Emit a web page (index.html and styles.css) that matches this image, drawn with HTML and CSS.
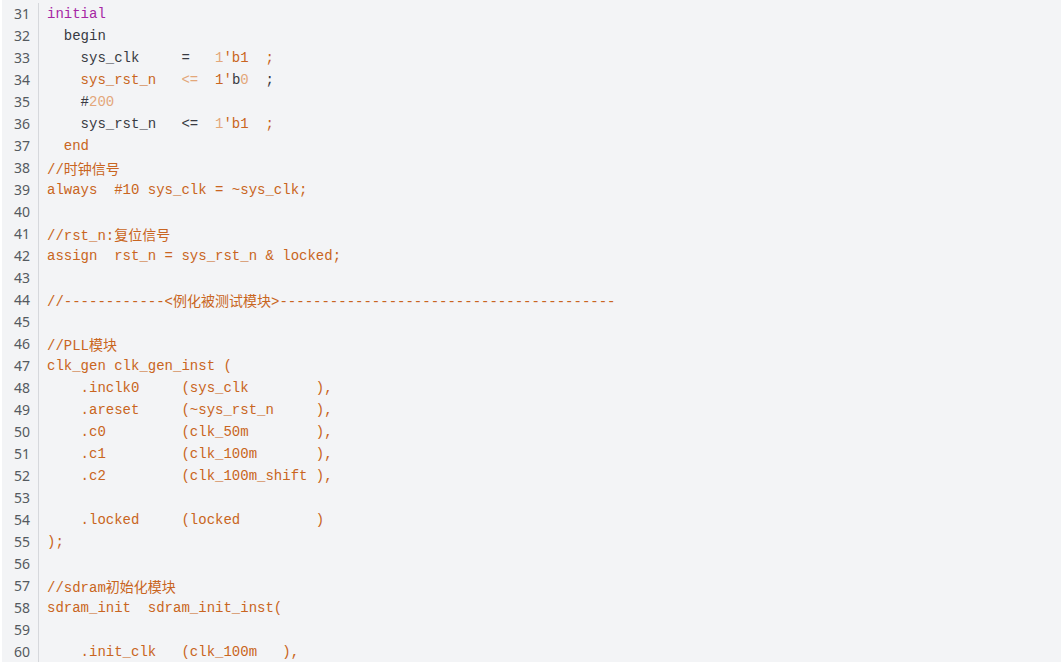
FILE: index.html
```html
<!DOCTYPE html>
<html>
<head>
<meta charset="utf-8">
<link rel="stylesheet" href="styles.css">
</head>
<body>
<div class="code">
<div class="gutter">
<div>31</div><div>32</div><div>33</div><div>34</div><div>35</div><div>36</div><div>37</div><div>38</div><div>39</div><div>40</div><div>41</div><div>42</div><div>43</div><div>44</div><div>45</div><div>46</div><div>47</div><div>48</div><div>49</div><div>50</div><div>51</div><div>52</div><div>53</div><div>54</div><div>55</div><div>56</div><div>57</div><div>58</div><div>59</div><div>60</div>
</div>
<div class="lines">
<div class="ln"><span class="kw">initial</span></div>
<div class="ln">  begin</div>
<div class="ln">    sys_clk     =   <span class="num">1</span><span class="or">'b1</span>  <span class="or">;</span></div>
<div class="ln">    <span class="or">sys_rst_n</span>   <span class="num">&lt;=</span>  <span class="or">1'</span>b<span class="num">0</span>  ;</div>
<div class="ln">    #<span class="num">200</span></div>
<div class="ln">    sys_rst_n   &lt;=  <span class="num">1</span><span class="or">'b1</span>  <span class="or">;</span></div>
<div class="ln">  <span class="or">end</span></div>
<div class="ln or">//<span class="cjk">时钟信号</span></div>
<div class="ln or">always  #10 sys_clk = ~sys_clk;</div>
<div class="ln"></div>
<div class="ln or">//rst_n:<span class="cjk">复位信号</span></div>
<div class="ln or">assign  rst_n = sys_rst_n &amp; locked;</div>
<div class="ln"></div>
<div class="ln or">//------------&lt;<span class="cjk">例化被测试模块</span>&gt;----------------------------------------</div>
<div class="ln"></div>
<div class="ln or">//PLL<span class="cjk">模块</span></div>
<div class="ln or">clk_gen clk_gen_inst (</div>
<div class="ln or">    .inclk0     (sys_clk        ),</div>
<div class="ln or">    .areset     (~sys_rst_n     ),</div>
<div class="ln or">    .c0         (clk_50m        ),</div>
<div class="ln or">    .c1         (clk_100m       ),</div>
<div class="ln or">    .c2         (clk_100m_shift ),</div>
<div class="ln"></div>
<div class="ln or">    .locked     (locked         )</div>
<div class="ln or">);</div>
<div class="ln"></div>
<div class="ln or">//sdram<span class="cjk">初始化模块</span></div>
<div class="ln or">sdram_init  sdram_init_inst(</div>
<div class="ln"></div>
<div class="ln or">    .init_clk   (clk_100m   ),</div>
</div>
</div>
</body>
</html>
```
FILE: styles.css
```css
html, body {
  margin: 0;
  padding: 0;
  background: #ffffff;
  height: 100%;
  overflow: hidden;
}
.code {
  margin-left: 2px;
  background: #f3f4f6;
  display: flex;
  height: 662px;
  padding-top: 3px;
  box-sizing: border-box;
  font-family: "Liberation Mono", "Noto Sans CJK SC", monospace;
  font-size: 14px;
  color: #383a42;
}
.gutter {
  width: 28px;
  padding-right: 8px;
  border-right: 1px solid #d6d8dc;
  text-align: right;
  color: #555a60;
  font-family: "Noto Sans", "Liberation Sans", sans-serif;
}
.gutter div {
  height: 22px;
  line-height: 22px;
}
.lines {
  padding-left: 8px;
}
.ln {
  height: 22px;
  line-height: 22px;
  white-space: pre;
}
.kw { color: #a626a4; }
.or { color: #c96521; }
.num { color: #e3a77a; }
.cjk {
  font-family: "Noto Sans CJK SC", sans-serif;
}
```
